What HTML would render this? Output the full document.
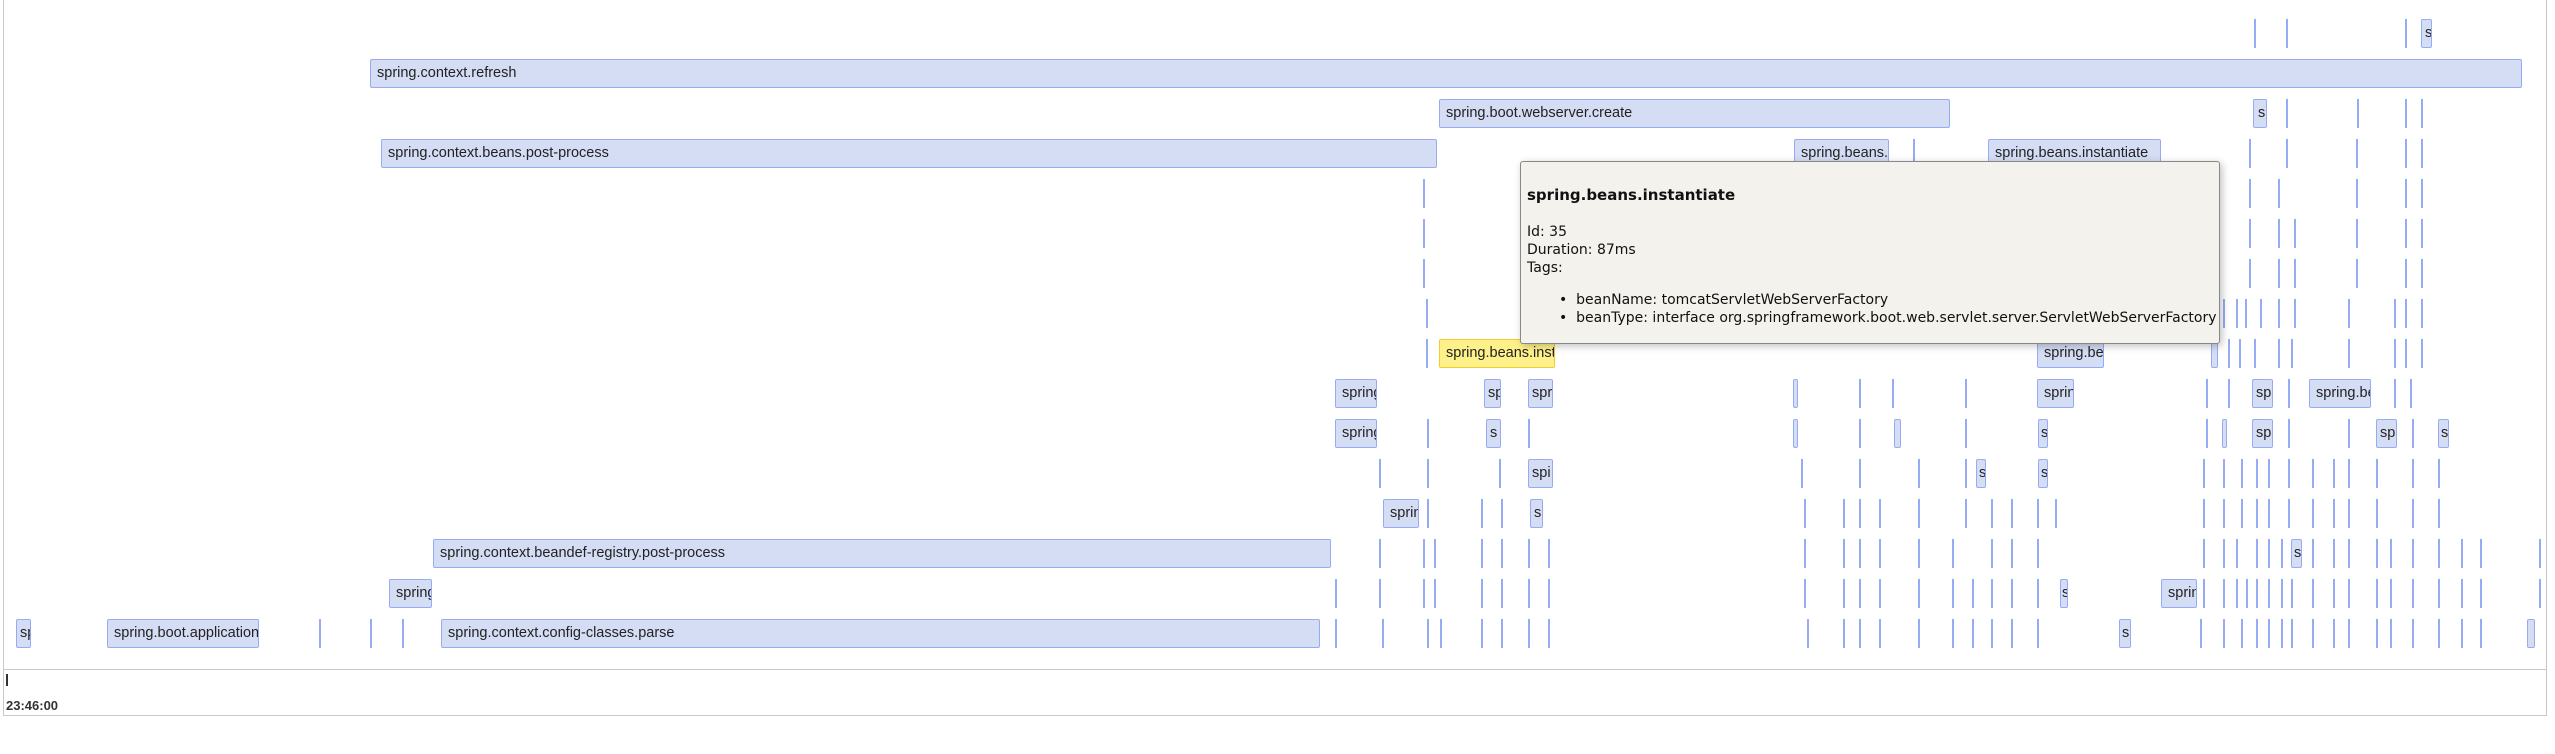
<!DOCTYPE html>
<html><head><meta charset="utf-8"><style>
html,body{margin:0;padding:0;background:#fff;width:2555px;height:754px;overflow:hidden;font-family:"Liberation Sans",Arial,sans-serif}
#frame{position:absolute;left:3px;top:-2px;width:2544px;height:718px;border:1px solid #c8c8c8;border-top:none;box-sizing:border-box}
#axis{position:absolute;left:4px;top:669px;width:2543px;height:1px;background:#c8c8c8}
.r{position:absolute;left:0;height:29px;width:2555px}
.b{position:absolute;top:0;height:29px;box-sizing:border-box;background:#d5ddf5;border:1.5px solid #95acf5;border-radius:2px;overflow:hidden;white-space:nowrap;font-size:14.5px;line-height:26px;padding-left:6px;color:#222}
.l{position:absolute;top:0;height:29px;width:2px;background:#95acf5}
.y{background:#fff18a;border-color:#f2cc30}
#tip{position:absolute;left:1520px;top:161px;width:700px;height:183px;box-sizing:border-box;background:#f3f2ec;border:1px solid #888;border-radius:3px;box-shadow:2px 2px 8px rgba(0,0,0,.25);font-family:"DejaVu Sans",sans-serif;font-size:14px;color:#111}
#tip b{position:absolute;top:24px;left:6px;font-size:15px}
#tip div{position:absolute;left:6px;white-space:nowrap}
</style></head><body>
<div id="frame"></div>
<div id="axis"></div>
<div style="position:absolute;left:6px;top:674px;width:2px;height:12px;background:#333"></div>
<div style="position:absolute;left:6px;top:698px;font-size:13px;font-weight:bold;color:#333">23:46:00</div>

<div class="r" style="top:19px"><div class="l" style="left:2254px"></div><div class="l" style="left:2286px"></div><div class="l" style="left:2405px"></div><div class="b" style="left:2421px;width:11px;padding-left:3px">s</div></div>

<div class="r" style="top:59px"><div class="b" style="left:370px;width:2152px">spring.context.refresh</div></div>

<div class="r" style="top:99px"><div class="b" style="left:1439px;width:511px">spring.boot.webserver.create</div><div class="b" style="left:2253px;width:14px;padding-left:4px">s</div><div class="l" style="left:2286px"></div><div class="l" style="left:2357px"></div><div class="l" style="left:2405px"></div><div class="l" style="left:2421px"></div></div>

<div class="r" style="top:139px"><div class="b" style="left:381px;width:1056px">spring.context.beans.post-process</div><div class="b" style="left:1794px;width:95px">spring.beans.</div><div class="l" style="left:1913px"></div><div class="b" style="left:1988px;width:173px">spring.beans.instantiate</div><div class="l" style="left:2249px"></div><div class="l" style="left:2286px"></div><div class="l" style="left:2356px"></div><div class="l" style="left:2405px"></div><div class="l" style="left:2421px"></div></div>

<div class="r" style="top:179px"><div class="l" style="left:1423px"></div><div class="l" style="left:2249px"></div><div class="l" style="left:2278px"></div><div class="l" style="left:2356px"></div><div class="l" style="left:2405px"></div><div class="l" style="left:2421px"></div></div>
<div class="r" style="top:219px"><div class="l" style="left:1423px"></div><div class="l" style="left:2249px"></div><div class="l" style="left:2278px"></div><div class="l" style="left:2294px"></div><div class="l" style="left:2356px"></div><div class="l" style="left:2405px"></div><div class="l" style="left:2421px"></div></div>
<div class="r" style="top:259px"><div class="l" style="left:1423px"></div><div class="l" style="left:2249px"></div><div class="l" style="left:2278px"></div><div class="l" style="left:2294px"></div><div class="l" style="left:2356px"></div><div class="l" style="left:2405px"></div><div class="l" style="left:2421px"></div></div>
<div class="r" style="top:299px"><div class="l" style="left:1426px"></div><div class="l" style="left:2195px"></div><div class="l" style="left:2213px"></div><div class="l" style="left:2223px"></div><div class="l" style="left:2236px"></div><div class="l" style="left:2245px"></div><div class="l" style="left:2260px"></div><div class="l" style="left:2278px"></div><div class="l" style="left:2294px"></div><div class="l" style="left:2348px"></div><div class="l" style="left:2394px"></div><div class="l" style="left:2405px"></div><div class="l" style="left:2421px"></div></div>

<div class="r" style="top:339px"><div class="l" style="left:1426px"></div><div class="b y" style="left:1439px;width:116px">spring.beans.instantiate</div><div class="b" style="left:2037px;width:67px">spring.beans</div><div class="b" style="left:2211px;width:7px;padding:0"></div><div class="l" style="left:2228px"></div><div class="l" style="left:2239px"></div><div class="l" style="left:2254px"></div><div class="l" style="left:2278px"></div><div class="l" style="left:2291px"></div><div class="l" style="left:2348px"></div><div class="l" style="left:2394px"></div><div class="l" style="left:2405px"></div><div class="l" style="left:2421px"></div></div>

<div class="r" style="top:379px"><div class="b" style="left:1335px;width:42px">spring</div><div class="b" style="left:1484px;width:17px;padding-left:3px">sp</div><div class="b" style="left:1528px;width:25px;padding-left:3px">spr</div><div class="b" style="left:1793px;width:5px;padding:0"></div><div class="l" style="left:1859px"></div><div class="l" style="left:1892px"></div><div class="l" style="left:1965px"></div><div class="b" style="left:2037px;width:37px">sprin</div><div class="l" style="left:2206px"></div><div class="l" style="left:2228px"></div><div class="b" style="left:2252px;width:21px;padding-left:3px">sp</div><div class="l" style="left:2288px"></div><div class="b" style="left:2309px;width:62px">spring.be</div><div class="l" style="left:2394px"></div><div class="l" style="left:2410px"></div></div>

<div class="r" style="top:419px"><div class="b" style="left:1335px;width:42px">spring</div><div class="l" style="left:1427px"></div><div class="b" style="left:1486px;width:15px;padding-left:3px">s</div><div class="l" style="left:1528px"></div><div class="b" style="left:1793px;width:5px;padding:0"></div><div class="l" style="left:1859px"></div><div class="b" style="left:1894px;width:7px;padding:0"></div><div class="l" style="left:1965px"></div><div class="b" style="left:2038px;width:10px;padding-left:2px">s</div><div class="l" style="left:2206px"></div><div class="b" style="left:2222px;width:5px;padding:0"></div><div class="b" style="left:2252px;width:21px;padding-left:3px">sp</div><div class="l" style="left:2288px"></div><div class="l" style="left:2348px"></div><div class="b" style="left:2376px;width:21px;padding-left:3px">sp</div><div class="l" style="left:2412px"></div><div class="b" style="left:2438px;width:11px;padding-left:2px">s</div></div>

<div class="r" style="top:459px"><div class="l" style="left:1379px"></div><div class="l" style="left:1427px"></div><div class="l" style="left:1499px"></div><div class="b" style="left:1528px;width:25px;padding-left:3px">spi</div><div class="l" style="left:1801px"></div><div class="l" style="left:1859px"></div><div class="l" style="left:1918px"></div><div class="l" style="left:1965px"></div><div class="b" style="left:1976px;width:10px;padding-left:2px">s</div><div class="b" style="left:2038px;width:10px;padding-left:2px">s</div><div class="l" style="left:2203px"></div><div class="l" style="left:2223px"></div><div class="l" style="left:2241px"></div><div class="l" style="left:2256px"></div><div class="l" style="left:2268px"></div><div class="l" style="left:2288px"></div><div class="l" style="left:2312px"></div><div class="l" style="left:2333px"></div><div class="l" style="left:2348px"></div><div class="l" style="left:2376px"></div><div class="l" style="left:2412px"></div><div class="l" style="left:2438px"></div></div>

<div class="r" style="top:499px"><div class="b" style="left:1383px;width:36px">sprin</div><div class="l" style="left:1427px"></div><div class="l" style="left:1481px"></div><div class="l" style="left:1501px"></div><div class="b" style="left:1530px;width:13px;padding-left:3px">s</div><div class="l" style="left:1804px"></div><div class="l" style="left:1843px"></div><div class="l" style="left:1859px"></div><div class="l" style="left:1879px"></div><div class="l" style="left:1918px"></div><div class="l" style="left:1965px"></div><div class="l" style="left:1991px"></div><div class="l" style="left:2011px"></div><div class="l" style="left:2037px"></div><div class="l" style="left:2055px"></div><div class="l" style="left:2203px"></div><div class="l" style="left:2223px"></div><div class="l" style="left:2241px"></div><div class="l" style="left:2256px"></div><div class="l" style="left:2268px"></div><div class="l" style="left:2288px"></div><div class="l" style="left:2312px"></div><div class="l" style="left:2333px"></div><div class="l" style="left:2348px"></div><div class="l" style="left:2376px"></div><div class="l" style="left:2412px"></div><div class="l" style="left:2438px"></div></div>

<div class="r" style="top:539px"><div class="b" style="left:433px;width:898px">spring.context.beandef-registry.post-process</div><div class="l" style="left:1379px"></div><div class="l" style="left:1423px"></div><div class="l" style="left:1434px"></div><div class="l" style="left:1481px"></div><div class="l" style="left:1501px"></div><div class="l" style="left:1528px"></div><div class="l" style="left:1548px"></div><div class="l" style="left:1804px"></div><div class="l" style="left:1843px"></div><div class="l" style="left:1859px"></div><div class="l" style="left:1879px"></div><div class="l" style="left:1918px"></div><div class="l" style="left:1952px"></div><div class="l" style="left:1991px"></div><div class="l" style="left:2011px"></div><div class="l" style="left:2037px"></div><div class="l" style="left:2203px"></div><div class="l" style="left:2223px"></div><div class="l" style="left:2236px"></div><div class="l" style="left:2256px"></div><div class="l" style="left:2268px"></div><div class="l" style="left:2281px"></div><div class="b" style="left:2291px;width:11px;padding-left:2px">s</div><div class="l" style="left:2312px"></div><div class="l" style="left:2333px"></div><div class="l" style="left:2348px"></div><div class="l" style="left:2376px"></div><div class="l" style="left:2390px"></div><div class="l" style="left:2412px"></div><div class="l" style="left:2438px"></div><div class="l" style="left:2461px"></div><div class="l" style="left:2480px"></div><div class="l" style="left:2539px"></div></div>

<div class="r" style="top:579px"><div class="b" style="left:389px;width:43px">spring</div><div class="l" style="left:1335px"></div><div class="l" style="left:1379px"></div><div class="l" style="left:1423px"></div><div class="l" style="left:1434px"></div><div class="l" style="left:1481px"></div><div class="l" style="left:1501px"></div><div class="l" style="left:1528px"></div><div class="l" style="left:1548px"></div><div class="l" style="left:1804px"></div><div class="l" style="left:1843px"></div><div class="l" style="left:1859px"></div><div class="l" style="left:1879px"></div><div class="l" style="left:1918px"></div><div class="l" style="left:1952px"></div><div class="l" style="left:1972px"></div><div class="l" style="left:1991px"></div><div class="l" style="left:2011px"></div><div class="l" style="left:2037px"></div><div class="b" style="left:2060px;width:8px;padding-left:1px">s</div><div class="b" style="left:2161px;width:36px">sprin</div><div class="l" style="left:2203px"></div><div class="l" style="left:2223px"></div><div class="l" style="left:2236px"></div><div class="l" style="left:2246px"></div><div class="l" style="left:2256px"></div><div class="l" style="left:2268px"></div><div class="l" style="left:2281px"></div><div class="l" style="left:2291px"></div><div class="l" style="left:2312px"></div><div class="l" style="left:2333px"></div><div class="l" style="left:2348px"></div><div class="l" style="left:2376px"></div><div class="l" style="left:2390px"></div><div class="l" style="left:2412px"></div><div class="l" style="left:2438px"></div><div class="l" style="left:2461px"></div><div class="l" style="left:2480px"></div><div class="l" style="left:2539px"></div></div>

<div class="r" style="top:619px"><div class="b" style="left:16px;width:15px;padding-left:3px">sp</div><div class="b" style="left:107px;width:152px">spring.boot.application</div><div class="l" style="left:319px"></div><div class="l" style="left:370px"></div><div class="l" style="left:402px"></div><div class="b" style="left:441px;width:879px">spring.context.config-classes.parse</div></div>
<div class="r" style="top:619px"><div class="l" style="left:1335px"></div><div class="l" style="left:1382px"></div><div class="l" style="left:1427px"></div><div class="l" style="left:1440px"></div><div class="l" style="left:1481px"></div><div class="l" style="left:1501px"></div><div class="l" style="left:1528px"></div><div class="l" style="left:1548px"></div><div class="l" style="left:1807px"></div><div class="l" style="left:1843px"></div><div class="l" style="left:1859px"></div><div class="l" style="left:1879px"></div><div class="l" style="left:1918px"></div><div class="l" style="left:1952px"></div><div class="l" style="left:1972px"></div><div class="l" style="left:1991px"></div><div class="l" style="left:2011px"></div><div class="l" style="left:2037px"></div><div class="b" style="left:2119px;width:12px;padding-left:2px">s</div><div class="l" style="left:2200px"></div><div class="l" style="left:2223px"></div><div class="l" style="left:2241px"></div><div class="l" style="left:2256px"></div><div class="l" style="left:2268px"></div><div class="l" style="left:2281px"></div><div class="l" style="left:2291px"></div><div class="l" style="left:2312px"></div><div class="l" style="left:2333px"></div><div class="l" style="left:2348px"></div><div class="l" style="left:2376px"></div><div class="l" style="left:2390px"></div><div class="l" style="left:2412px"></div><div class="l" style="left:2438px"></div><div class="l" style="left:2461px"></div><div class="l" style="left:2480px"></div><div class="b" style="left:2527px;width:8px;padding:0"></div></div>

<div id="tip">
<b>spring.beans.instantiate</b>
<div style="top:62px">Id: 35</div>
<div style="top:80px">Duration: 87ms</div>
<div style="top:98px">Tags:</div>
<div style="top:130px;left:38px">&#8226;&nbsp; beanName: tomcatServletWebServerFactory</div>
<div style="top:148px;left:38px">&#8226;&nbsp; beanType: interface org.springframework.boot.web.servlet.server.ServletWebServerFactory</div>
</div>
</body></html>
